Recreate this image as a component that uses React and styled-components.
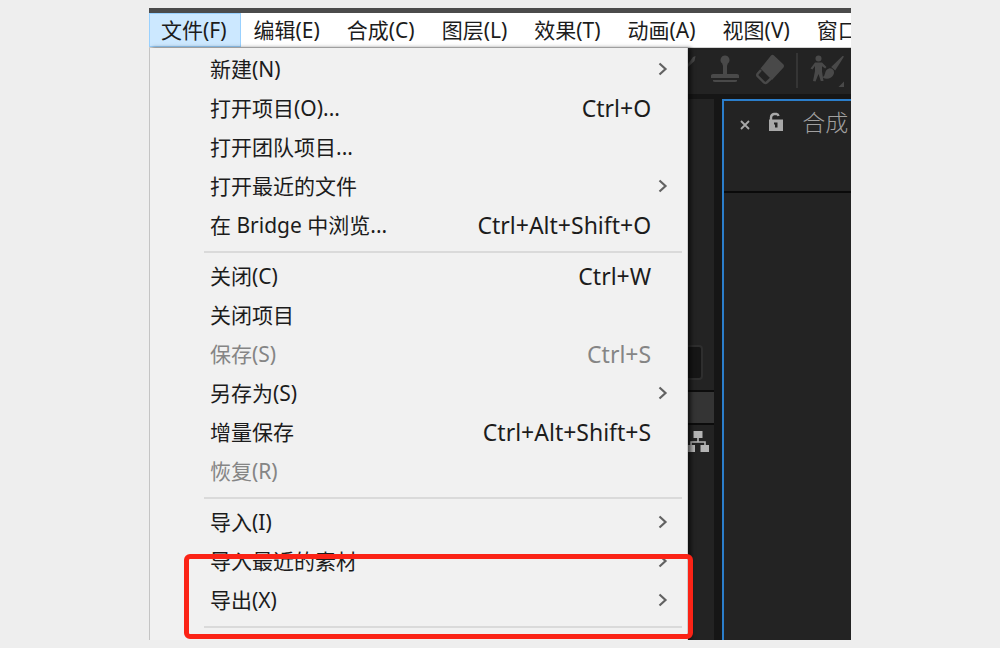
import React from "react";
import styled, { createGlobalStyle } from "styled-components";

const GlobalStyle = createGlobalStyle`
  * { box-sizing: border-box; }
  body { margin: 0; background: #eeeeee; }
  button { margin: 0; padding: 0; border: 0; background: none; font: inherit; color: inherit; }
  svg { display: block; flex: none; }
`;

const Page = styled.main`
  padding: 8px 14.9%;
  font-family: "Noto Sans", "Noto Sans CJK SC", sans-serif;
  font-size: 21px;
  line-height: 32px;
  color: #1c1c1c;
`;

const AppWindow = styled.div`
  display: flex;
  flex-direction: column;
  border-top: 5px solid #4b4b4b;
  overflow: hidden;
`;

const MenuBar = styled.nav`
  display: flex;
  gap: 1px;
  height: 35px;
  background: #ffffff;
  border-bottom: 1px solid #d2d2d2;
  overflow: hidden;
`;

const MenuBarItem = styled.button`
  flex: none;
  padding: 0 13px 1px 11px;
  border: 1px solid ${(p) => (p.$open ? "#99d1ff" : "transparent")};
  background: ${(p) => (p.$open ? "#cce8ff" : "transparent")};
  white-space: nowrap;
`;

const Body = styled.div`
  display: flex;
  background: #161616;
`;

const Menu = styled.div`
  position: relative;
  z-index: 1;
  flex: none;
  width: 76.8%;
  padding: 3px 0 7px;
  background: #f1f1f1;
  border-left: 1px solid #c4c4c4;
  border-right: 1px solid #d0d0d0;
  box-shadow: 3px 0 4px rgba(0, 0, 0, 0.6);
`;

const MenuRow = styled.button`
  display: flex;
  align-items: center;
  width: 100%;
  height: 39px;
  padding: 0 0 3px 60px;
  text-align: left;
  white-space: nowrap;
  color: ${(p) => (p.disabled ? "#858585" : "inherit")};
`;

const Label = styled.span`
  flex: 1;
`;

const Shortcut = styled.span`
  font-size: 23px;
`;

const ArrowSlot = styled.span`
  display: flex;
  width: 36px;
  padding-left: 6px;
`;

const Separator = styled.hr`
  height: 2px;
  margin: 5px 5px 5px 54px;
  border: 0;
  background: #dadada;
`;

const Highlight = styled.div`
  position: absolute;
  left: 34px;
  right: -6px;
  bottom: 1px;
  height: 85px;
  border: 5px solid #fb2316;
  border-radius: 6px;
  pointer-events: none;
`;

const Workspace = styled.div`
  display: flex;
  flex: 1;
  flex-direction: column;
  gap: 5px;
  min-width: 0;
  overflow: hidden;
`;

const Toolbar = styled.div`
  display: flex;
  align-items: center;
  gap: 12px;
  height: 46px;
  padding-bottom: 2px;
  background: #232323;
  color: #494949;
`;

const ToolDivider = styled.span`
  flex: none;
  width: 2px;
  height: 35px;
  background: #353535;
`;

const Panels = styled.div`
  display: flex;
  flex: 1;
  gap: 8px;
`;

const ProjectPanel = styled.section`
  flex: none;
  width: 26px;
  padding-top: 246px;
  background: #232323;
`;

const SearchEnd = styled.div`
  width: 15px;
  height: 35px;
  margin-bottom: 10px;
  border: 2px solid #2e2e2e;
  border-left: 0;
  border-radius: 0 4px 4px 0;
  background: #161616;
`;

const ListHeader = styled.div`
  height: 35px;
  margin-bottom: 5px;
  border: solid #0c0c0c;
  border-width: 2px 0;
  background: #343434;
`;

const CompPanel = styled.section`
  flex: 1;
  min-width: 0;
  border: solid #2b7ecb;
  border-width: 2px 0 0 2px;
  background: #232323;
  overflow: hidden;
`;

const CompHeader = styled.header`
  display: flex;
  align-items: flex-start;
  height: 92px;
  padding: 8px 0 0 15px;
  border-bottom: 2px solid #0a0a0a;
  color: #a8a8a8;
`;

const IconButton = styled.button`
  display: flex;
  flex: none;
  margin-right: ${(p) => p.$gap}px;
  padding-top: ${(p) => p.$drop}px;
`;

const CompTitle = styled.span`
  font-size: 23px;
  font-weight: 300;
  line-height: 26px;
  white-space: nowrap;
  color: #a0a0a0;
`;

const menus = ["文件(F)", "编辑(E)", "合成(C)", "图层(L)", "效果(T)", "动画(A)", "视图(V)", "窗口"];

const groups = [
  [
    { label: "新建(N)", sub: true },
    { label: "打开项目(O)...", keys: "Ctrl+O" },
    { label: "打开团队项目..." },
    { label: "打开最近的文件", sub: true },
    { label: "在 Bridge 中浏览...", keys: "Ctrl+Alt+Shift+O" },
  ],
  [
    { label: "关闭(C)", keys: "Ctrl+W" },
    { label: "关闭项目" },
    { label: "保存(S)", keys: "Ctrl+S", disabled: true },
    { label: "另存为(S)", sub: true },
    { label: "增量保存", keys: "Ctrl+Alt+Shift+S" },
    { label: "恢复(R)", disabled: true },
  ],
  [
    { label: "导入(I)", sub: true },
    { label: "导入最近的素材", sub: true },
    { label: "导出(X)", sub: true },
  ],
];

const Chevron = () => (
  <svg width="12" height="16" viewBox="0 0 12 16" fill="none" stroke="#626262" strokeWidth="2.2">
    <path d="M2.5 2.5 8.5 8l-6 5.5" />
  </svg>
);

const BrushTip = () => (
  <svg width="8" height="32" viewBox="0 0 8 32" fill="currentColor">
    <path d="M0 10 5 3l2.500-1-1 5-6.500 6Z" />
  </svg>
);

const StampIcon = () => (
  <svg width="36" height="32" viewBox="0 0 36 32" fill="currentColor">
    <path d="M17 1.500a4.500 4.500 0 0 1 2.800 8L19 12v8h10q2 0 2 1.500V24H3v-2.500Q3 20 5 20h10v-8l-.8-2.500a4.500 4.500 0 0 1 2.800-8Z" />
    <path d="M5 26h24v1q0 1-2 1H7q-2 0-2-1Z" />
  </svg>
);

const EraserIcon = () => (
  <svg width="28" height="32" viewBox="0 0 28 32">
    <path d="M15 1.500q1.500-1.500 3 0l9.500 9q1 1.500 0 3L16 26 4.500 14.500Z" fill="currentColor" />
    <path d="M5 16 1.500 20q-.7 1.200.2 2.200l6.500 6.300q1.300 1 2.500 0l4.300-4" fill="none" stroke="currentColor" strokeWidth="2.400" />
  </svg>
);

const RotoBrushIcon = () => (
  <svg width="34" height="34" viewBox="0 0 34 34" fill="currentColor">
    <circle cx="8.500" cy="5.500" r="3" />
    <path d="M5 9.500h7l4.500 4.500-1.300 1.500-3.200-2.200v5.200l1.500 9.500h-2.700L8.500 21 5.500 28.500 3 28l2-10v-5l-2.500 3.500-2-1Z" />
    <path d="M32.500 3q1.500-.5 1.200 1l-8.500 13.500-4-3.500Z" />
    <path d="M19.500 15.200q2.500-.4 4.200 2.300 1 2.500-.5 4.700-2.200 3.300-6.200 3.500-2.500 0-4.500-1.500 2-.7 2.500-3.700.8-4.500 4.500-5.300Z" />
    <path d="M34 28.500V34h-5.500Z" />
  </svg>
);

const CloseIcon = () => (
  <svg width="12" height="12" viewBox="0 0 12 12" stroke="currentColor" strokeWidth="1.800">
    <path d="m2 2 8 8M10 2l-8 8" />
  </svg>
);

const UnlockIcon = () => (
  <svg width="16" height="20" viewBox="0 0 16 20">
    <path d="M3 9V5.500Q3.200 2.500 6 2h2.500Q10.200 2.200 10.500 4" fill="none" stroke="currentColor" strokeWidth="2.400" />
    <path d="M1 7.500h14V19H1Z" fill="currentColor" />
    <path d="M6 10.500h3.500v5H7v-3H6Z" fill="#232323" />
  </svg>
);

const FlowchartIcon = () => (
  <svg width="22" height="22" viewBox="0 0 22 22" fill="#b4b4b4">
    <path d="M5.500 1h9v7h-9ZM0 15h7v7H0ZM12.500 15H21v7h-8.500Z" />
    <path d="M10 7v5M3 15v-3h14v3" fill="none" stroke="#b4b4b4" strokeWidth="1.600" />
  </svg>
);

function MenuGroup({ items }) {
  return (
    <>
      {items.map((item) => (
        <MenuRow key={item.label} type="button" role="menuitem" disabled={item.disabled}>
          <Label>{item.label}</Label>
          {item.keys && <Shortcut>{item.keys}</Shortcut>}
          <ArrowSlot>{item.sub && <Chevron />}</ArrowSlot>
        </MenuRow>
      ))}
      <Separator />
    </>
  );
}

export default function App() {
  return (
    <Page>
      <GlobalStyle />
      <AppWindow>
        <MenuBar>
          {menus.map((name, i) => (
            <MenuBarItem key={name} type="button" $open={i === 0}>
              {name}
            </MenuBarItem>
          ))}
        </MenuBar>
        <Body>
          <Menu role="menu">
            {groups.map((items) => (
              <MenuGroup key={items[0].label} items={items} />
            ))}
            <Highlight />
          </Menu>
          <Workspace>
            <Toolbar>
              <BrushTip />
              <StampIcon />
              <EraserIcon />
              <ToolDivider />
              <RotoBrushIcon />
            </Toolbar>
            <Panels>
              <ProjectPanel>
                <SearchEnd />
                <ListHeader />
                <FlowchartIcon />
              </ProjectPanel>
              <CompPanel>
                <CompHeader>
                  <IconButton type="button" aria-label="关闭" $gap={17} $drop={10}>
                    <CloseIcon />
                  </IconButton>
                  <IconButton type="button" aria-label="锁定" $gap={18} $drop={3}>
                    <UnlockIcon />
                  </IconButton>
                  <CompTitle>合成</CompTitle>
                </CompHeader>
              </CompPanel>
            </Panels>
          </Workspace>
        </Body>
      </AppWindow>
    </Page>
  );
}
